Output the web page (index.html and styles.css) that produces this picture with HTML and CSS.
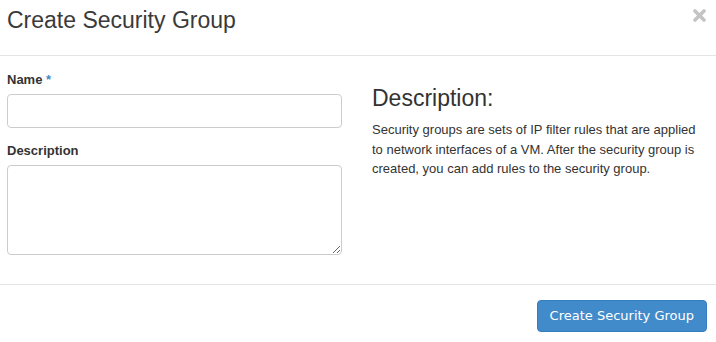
FILE: index.html
```html
<!DOCTYPE html>
<html lang="en">
<head>
    <meta charset="UTF-8">
    <meta name="viewport" content="width=device-width, initial-scale=1.0">
    <link rel="stylesheet" href="styles.css">
</head>
<body>
    <div class="modal-content">
        <div class="modal-header">
            <h3 class="modal-title">Create Security Group</h3>
            <button class="close" type="button" aria-label="Close">
                <svg width="13" height="13" viewBox="0 0 13 13">
                    <path d="M2 2 L11 11 M11 2 L2 11" stroke="#c4c4c4" stroke-width="3.6" stroke-linecap="round"/>
                </svg>
            </button>
        </div>

        <div class="modal-body">
            <div class="left">
                <div class="form-group">
                    <label for="id_name">Name <span class="required">*</span></label>
                    <input id="id_name" class="form-control" type="text">
                </div>
                <div class="form-group">
                    <label for="id_description">Description</label>
                    <textarea id="id_description" class="form-control area"></textarea>
                </div>
            </div>
            <div class="right">
                <h3 class="help-title">Description:</h3>
                <p>Security groups are sets of IP filter rules that are applied to network interfaces of a VM. After the security group is created, you can add rules to the security group.</p>
            </div>
        </div>

        <div class="modal-footer">
            <button class="btn btn-primary" type="submit">Create Security Group</button>
        </div>
    </div>
</body>
</html>
```

FILE: styles.css
```css
body {
    margin: 0;
    font-family: "Liberation Sans", Arial, sans-serif;
    font-size: 13px;
    line-height: 19px;
    color: #333;
    background: #fff;
}

.modal-header {
    display: flex;
    justify-content: space-between;
    align-items: flex-start;
    padding: 8px 10px 22px 7px;
    border-bottom: 1px solid #e5e5e5;
}
.modal-title {
    margin: 0;
    font-size: 23px;
    font-weight: normal;
    line-height: 25px;
    color: #3a3a3a;
}
.close {
    border: none;
    background: none;
    padding: 0;
    margin-top: 1px;
    width: 13px;
    height: 13px;
    cursor: pointer;
}
.close svg {
    display: block;
}

.modal-body {
    display: grid;
    grid-template-columns: 335px 1fr;
    gap: 30px;
    padding: 14px 9px 16px 7px;
}
.form-group {
    margin-bottom: 13px;
}
.form-group label {
    display: block;
    font-weight: bold;
    margin-bottom: 5px;
}
.required {
    color: #428bca;
}
.form-control {
    display: block;
    box-sizing: border-box;
    width: 100%;
    height: 34px;
    border: 1px solid #ccc;
    border-radius: 4px;
    padding: 6px 12px;
    font: inherit;
    margin: 0;
}
.area {
    height: 90px;
}

.help-title {
    margin: 16px 0 9px;
    font-size: 23px;
    font-weight: normal;
    line-height: 25px;
}
.right p {
    margin: 0;
    line-height: 19.5px;
}

.modal-footer {
    display: flex;
    justify-content: flex-end;
    padding: 15px 9px 10px;
    border-top: 1px solid #e5e5e5;
}
.btn {
    font-family: "DejaVu Sans", sans-serif;
    font-size: 13px;
    line-height: 18px;
    padding: 6px 12px;
    border-radius: 4px;
    cursor: pointer;
}
.btn-primary {
    color: #fff;
    background-color: #428bca;
    border: 1px solid #357ebd;
}
```
